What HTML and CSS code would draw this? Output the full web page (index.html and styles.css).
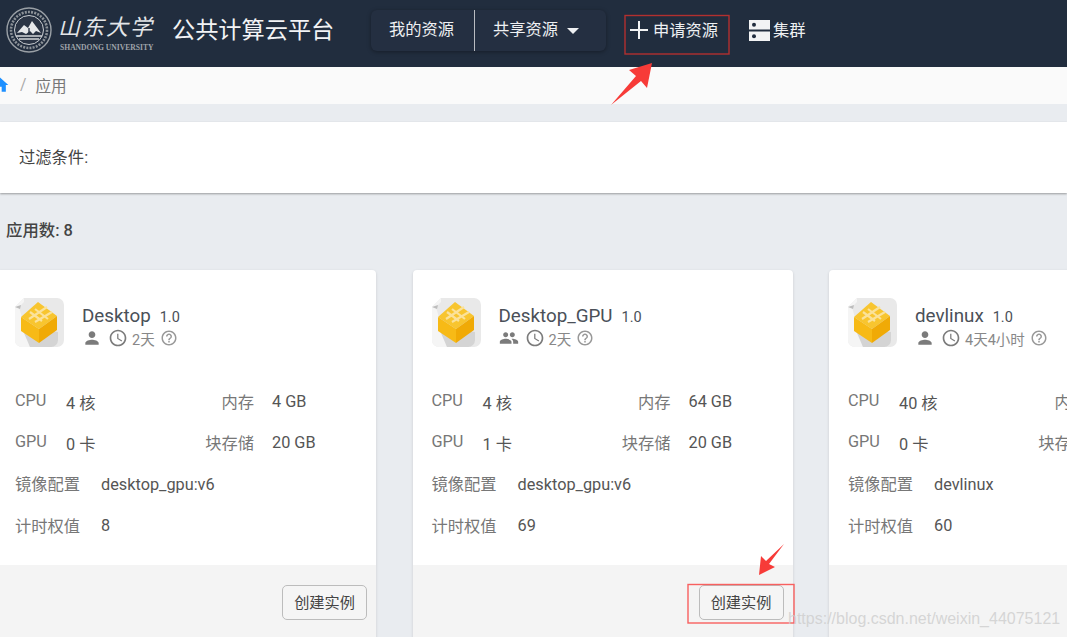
FILE: index.html
```html
<!DOCTYPE html>
<html lang="zh">
<head>
<meta charset="utf-8">
<title>公共计算云平台</title>
<link rel="stylesheet" href="styles.css">
</head>
<body>
<svg class="defs" width="0" height="0" aria-hidden="true">
  <symbol id="i-person" viewBox="0 0 24 24"><path d="M12 12c2.21 0 4-1.79 4-4s-1.79-4-4-4-4 1.79-4 4 1.79 4 4 4zm0 2c-2.67 0-8 1.34-8 4v2h16v-2c0-2.66-5.33-4-8-4z"/></symbol>
  <symbol id="i-group" viewBox="0 0 24 24"><path d="M16 11c1.66 0 2.99-1.34 2.99-3S17.66 5 16 5c-1.66 0-3 1.34-3 3s1.34 3 3 3zm-8 0c1.66 0 2.99-1.34 2.99-3S9.66 5 8 5C6.34 5 5 6.34 5 8s1.34 3 3 3zm0 2c-2.33 0-7 1.17-7 3.5V19h14v-2.5c0-2.33-4.67-3.5-7-3.5zm8 0c-.29 0-.62.02-.97.05 1.16.84 1.97 1.97 1.97 3.45V19h6v-2.5c0-2.33-4.67-3.5-7-3.5z"/></symbol>
  <symbol id="i-clock" viewBox="0 0 24 24"><path d="M11.99 2C6.47 2 2 6.48 2 12s4.47 10 9.99 10C17.52 22 22 17.52 22 12S17.52 2 11.99 2zM12 20c-4.42 0-8-3.58-8-8s3.58-8 8-8 8 3.58 8 8-3.58 8-8 8zm.5-13H11v6l5.25 3.15.75-1.23-4.5-2.67z"/></symbol>
  <symbol id="i-help" viewBox="0 0 24 24"><path d="M11 18h2v-2h-2v2zm1-16C6.48 2 2 6.48 2 12s4.48 10 10 10 10-4.48 10-10S17.52 2 12 2zm0 18c-4.41 0-8-3.59-8-8s3.59-8 8-8 8 3.59 8 8-3.59 8-8 8zm0-14c-2.21 0-4 1.79-4 4h2c0-1.1.9-2 2-2s2 .9 2 2c0 2-3 1.75-3 5h2c0-2.25 3-2.5 3-5 0-2.21-1.79-4-4-4z"/></symbol>
  <symbol id="i-box" viewBox="0 0 49 49">
    <path d="M7 0h35a7 7 0 0 1 7 7v35a7 7 0 0 1-7 7H7a7 7 0 0 1-7-7V9L9 0z" fill="#e9e9e9"/>
    <path d="M0 9L9 0v4L4 9l11 40H7a7 7 0 0 1-7-7z" fill="#f5f5f5"/>
    <path d="M0 9l6-2-1 4z" fill="#bdbdbd"/>
    <path d="M15 49L6 28l37 6v8a7 7 0 0 1-7 7z" fill="#d4d4d4"/>
    <path d="M23 4L42 18 24 31 6 19z" fill="#f8c52f"/>
    <path d="M6 19L24 31V45L6 33z" fill="#f7ba16"/>
    <path d="M42 18L24 31V45L42 32z" fill="#f0aa06"/>
    <path d="M14 21L32 9M20 24L37 14M20 11l13 10M15 14l12 9" stroke="#fbe29a" stroke-width="2.2" fill="none"/>
  </symbol>
  <symbol id="i-seal" viewBox="0 0 46 46">
    <circle cx="23" cy="23" r="22" fill="none" stroke="#9aa0a6" stroke-width="1.4"/>
    <circle cx="23" cy="23" r="18" fill="none" stroke="#8c9298" stroke-width="2.6" stroke-dasharray="2 1.2"/>
    <circle cx="23" cy="23" r="14.5" fill="#2a3444" stroke="#c9cdd1" stroke-width="1"/>
    <path d="M11 26l7-8 4 3 4-7 9 12-5-2-3 3-3-3-4 3-4-2z" fill="#e6e8ea"/>
    <path d="M10 29h26M13 32h20" stroke="#d3d6d9" stroke-width="1.3"/>
    <path d="M23 21v7" stroke="#2a3444" stroke-width="1.4"/>
  </symbol>
</svg>

<header class="topbar">
  <div class="brand">
    <svg class="seal"><use href="#i-seal"/></svg>
    <div class="brand-mark">
      <span class="brand-cn">山东大学</span>
      <span class="brand-en">SHANDONG UNIVERSITY</span>
    </div>
  </div>
  <div class="site-title">公共计算云平台</div>
  <nav class="nav-group">
    <a class="nav-item nav-mine">我的资源</a>
    <a class="nav-item nav-shared">共享资源<span class="caret"></span></a>
  </nav>
  <a class="nav-link nav-apply">
    <svg class="plus" viewBox="0 0 18 18"><path d="M8 0h2v8h8v2h-8v8H8v-8H0V8h8z"/></svg>申请资源
  </a>
  <a class="nav-link nav-cluster">
    <svg class="cluster-icon" viewBox="0 0 21 21">
      <path d="M0 0h21v9.5H0zM0 11.5h21V21H0z" fill="#f2f3f4"/>
      <circle cx="5" cy="4.7" r="2" fill="#212d3e"/><circle cx="5" cy="16.2" r="2" fill="#212d3e"/>
    </svg>集群
  </a>
</header>

<div class="crumbs">
  <svg class="home" viewBox="0 0 24 24"><path d="M10 20v-6h4v6h5v-8h3L12 3 2 12h3v8z"/></svg>
  <span class="crumb-sep">/</span>
  <span class="crumb-cur">应用</span>
</div>

<main class="main">
  <section class="filter">过滤条件:</section>
  <div class="count">应用数: 8</div>
  <div class="cards">

    <article class="card">
      <div class="card-head">
        <svg class="app-icon"><use href="#i-box"/></svg>
        <div class="app-info">
          <div class="app-name"><span>Desktop</span><small>1.0</small></div>
          <div class="app-meta">
            <svg class="mi mi-user"><use href="#i-person"/></svg>
            <svg class="mi mi-clock"><use href="#i-clock"/></svg>
            <span class="age">2天</span>
            <svg class="mi mi-help"><use href="#i-help"/></svg>
          </div>
        </div>
      </div>
      <dl class="specs">
        <div class="row"><dt>CPU</dt><dd>4 核</dd><dt class="r">内存</dt><dd class="v2">4 GB</dd></div>
        <div class="row"><dt>GPU</dt><dd>0 卡</dd><dt class="r">块存储</dt><dd class="v2">20 GB</dd></div>
        <div class="row wide"><dt>镜像配置</dt><dd>desktop_gpu:v6</dd></div>
        <div class="row wide"><dt>计时权值</dt><dd>8</dd></div>
      </dl>
      <div class="card-foot"><button class="btn">创建实例</button></div>
    </article>

    <article class="card">
      <div class="card-head">
        <svg class="app-icon"><use href="#i-box"/></svg>
        <div class="app-info">
          <div class="app-name"><span>Desktop_GPU</span><small>1.0</small></div>
          <div class="app-meta">
            <svg class="mi mi-user"><use href="#i-group"/></svg>
            <svg class="mi mi-clock"><use href="#i-clock"/></svg>
            <span class="age">2天</span>
            <svg class="mi mi-help"><use href="#i-help"/></svg>
          </div>
        </div>
      </div>
      <dl class="specs">
        <div class="row"><dt>CPU</dt><dd>4 核</dd><dt class="r">内存</dt><dd class="v2">64 GB</dd></div>
        <div class="row"><dt>GPU</dt><dd>1 卡</dd><dt class="r">块存储</dt><dd class="v2">20 GB</dd></div>
        <div class="row wide"><dt>镜像配置</dt><dd>desktop_gpu:v6</dd></div>
        <div class="row wide"><dt>计时权值</dt><dd>69</dd></div>
      </dl>
      <div class="card-foot"><button class="btn">创建实例</button></div>
    </article>

    <article class="card">
      <div class="card-head">
        <svg class="app-icon"><use href="#i-box"/></svg>
        <div class="app-info">
          <div class="app-name"><span>devlinux</span><small>1.0</small></div>
          <div class="app-meta">
            <svg class="mi mi-user"><use href="#i-person"/></svg>
            <svg class="mi mi-clock"><use href="#i-clock"/></svg>
            <span class="age">4天4小时</span>
            <svg class="mi mi-help"><use href="#i-help"/></svg>
          </div>
        </div>
      </div>
      <dl class="specs">
        <div class="row"><dt>CPU</dt><dd>40 核</dd><dt class="r">内存</dt><dd class="v2">64 GB</dd></div>
        <div class="row"><dt>GPU</dt><dd>0 卡</dd><dt class="r">块存储</dt><dd class="v2">20 GB</dd></div>
        <div class="row wide"><dt>镜像配置</dt><dd>devlinux</dd></div>
        <div class="row wide"><dt>计时权值</dt><dd>60</dd></div>
      </dl>
      <div class="card-foot"><button class="btn">创建实例</button></div>
    </article>

  </div>
</main>

<svg class="annot" viewBox="0 0 1067 637" aria-hidden="true">
  <rect class="box-dark" x="625" y="15.5" width="104" height="38.5"/>
  <rect class="box-light" x="688" y="584.5" width="106" height="38.5"/>
  <path class="arrow" d="M611 105L636 76 629 70 652 63 647 88 641 81z"/>
  <path class="arrow" d="M784 544L769 564 775 567 759 575 761 556 766 561z"/>
</svg>
<div class="watermark">https://blog.csdn.net/weixin_44075121</div>
</body>
</html>
```

FILE: styles.css
```css
* { box-sizing: border-box; }

html, body {
  margin: 0;
  height: 637px;
  overflow: hidden;
}

body {
  position: relative;
  background: #e9ecf0;
  color: #555;
  font-family: Roboto, "Noto Sans CJK SC", sans-serif;
  font-size: 16px;
}

.defs { position: absolute; }

/* top bar */
.topbar {
  display: flex;
  align-items: flex-start;
  height: 67px;
  padding-left: 6px;
  background: #212d3e;
  color: #eef0f2;
}

.brand { display: flex; padding-top: 7px; }
.seal { width: 46px; height: 46px; }
.brand-mark {
  display: flex;
  flex-direction: column;
  width: 95px;
  margin-left: 6px;
  padding-top: 2px;
}
.brand-cn {
  height: 35px;
  color: #e3e5e8;
  font-family: "Noto Sans CJK SC", sans-serif;
  font-size: 22px;
  font-style: italic;
  font-weight: 400;
  letter-spacing: 2px;
  line-height: 32px;
  white-space: nowrap;
}
.brand-en {
  padding-left: 2px;
  color: #9ea3a9;
  font-family: "Liberation Serif", serif;
  font-size: 7.6px;
  font-weight: 700;
  line-height: 8px;
  white-space: nowrap;
}

.site-title {
  width: 160px;
  margin-left: 19px;
  color: #f2f3f5;
  font-size: 23.2px;
  line-height: 60px;
  white-space: nowrap;
}

.nav-group {
  display: flex;
  height: 41px;
  margin: 10px 0 0 39px;
  background: #242f41;
  border-radius: 6px;
  box-shadow: 0 1px 4px rgba(0, 0, 0, .35);
  font-size: 16.3px;
  line-height: 40px;
}
.nav-item { display: flex; align-items: center; padding-bottom: 2px; white-space: nowrap; }
.nav-mine { width: 104px; padding-left: 18px; border-right: 1px solid #b9bcc1; }
.nav-shared { width: 131px; padding-left: 18px; }
.caret {
  width: 0;
  height: 0;
  margin: 2px 0 0 9px;
  border: 6px solid transparent;
  border-top-color: #eef0f2;
  border-bottom: 0;
}

.nav-link {
  display: flex;
  align-items: center;
  height: 20px;
  margin-top: 19px;
  font-size: 16.3px;
  white-space: nowrap;
}
.nav-apply { width: 124px; margin-left: 19px; padding-left: 5px; }
.plus { width: 18px; height: 18px; margin: 2px 5px 0 0; fill: #f2f3f4; }
.cluster-icon { width: 21px; height: 21px; margin: 2px 3px 0 0; }

/* breadcrumb */
.crumbs {
  display: flex;
  align-items: center;
  height: 37px;
  padding-bottom: 2px;
  background: #fafafa;
  color: #777;
  font-size: 15.6px;
}
.home { width: 20px; height: 20px; margin-left: -10px; fill: #1e90ff; }
.crumb-sep { margin-left: 10px; color: #aaa; }
.crumb-cur { margin-left: 9px; }

/* main */
.main { padding-top: 18px; }

.filter {
  height: 71px;
  padding-left: 19px;
  background: #fff;
  box-shadow: 0 1px 2px rgba(0, 0, 0, .35);
  color: #444;
  font-size: 16.3px;
  line-height: 71px;
}

.count {
  height: 77px;
  padding-left: 6px;
  color: #444;
  font-size: 16.4px;
  font-weight: 500;
  line-height: 76px;
}

.cards { display: flex; gap: 36.5px; margin-left: -4px; }

.card {
  flex: 0 0 380px;
  height: 440px;
  background: #fff;
  border-radius: 4px;
  box-shadow: 0 1px 3px rgba(0, 0, 0, .14);
}

.card-head { display: flex; padding: 28px 0 0 19px; }
.app-icon { width: 49px; height: 49px; }
.app-info { height: 49px; margin-left: 18px; }

.app-name {
  display: flex;
  align-items: baseline;
  height: 27px;
  margin-top: 5px;
  color: #4a5058;
  font-size: 18.8px;
  line-height: 27px;
  white-space: nowrap;
}
.app-name small { margin-left: 9px; font-size: 14.5px; }

.app-meta {
  display: flex;
  align-items: center;
  height: 20px;
  margin-top: -2px;
  color: #888;
  font-size: 14.5px;
  white-space: nowrap;
}
.mi { flex: none; width: 20px; height: 20px; fill: #7b7b7b; }
.mi-clock { margin-left: 6px; }
.age { margin-left: 4px; }
.mi-help { width: 18px; height: 18px; margin-left: 5px; fill: #999; }

.specs { height: 184px; margin: 34px 0 0; padding: 0 0 0 19px; }

.row {
  display: grid;
  grid-template-columns: 51px 140px 48px auto;
  align-items: center;
  height: 41.3px;
  font-size: 16.3px;
  white-space: nowrap;
}
.row.wide { grid-template-columns: 86px auto; }

dt { padding-bottom: 2px; color: #777; }
dd { margin: 0; color: #555; }
dt.r { display: flex; justify-content: flex-end; }
.v2 { padding-left: 18px; }

.card-foot {
  display: flex;
  justify-content: flex-end;
  height: 150px;
  padding: 20px 9px 0 0;
  background: #f4f4f4;
  border-radius: 0 0 4px 4px;
}

.btn {
  width: 85px;
  height: 35px;
  padding: 0 0 4px;
  background: #f5f5f5;
  border: 1px solid #bcbcbc;
  border-radius: 5px;
  color: #444;
  font-family: inherit;
  font-size: 15.2px;
}

/* annotations drawn over the screenshot */
.annot {
  position: absolute;
  top: 0;
  left: 0;
  width: 1067px;
  height: 637px;
  pointer-events: none;
}
.box-dark { fill: none; stroke: #b2302f; stroke-width: 1.4; }
.box-light { fill: none; stroke: #f8605f; stroke-width: 1.4; }
.arrow { fill: #f73b38; }

.watermark {
  position: absolute;
  top: 608px;
  left: 788px;
  color: rgba(205, 205, 205, .8);
  font-family: "Liberation Sans", sans-serif;
  font-size: 16px;
  line-height: 22px;
  white-space: nowrap;
}
```
